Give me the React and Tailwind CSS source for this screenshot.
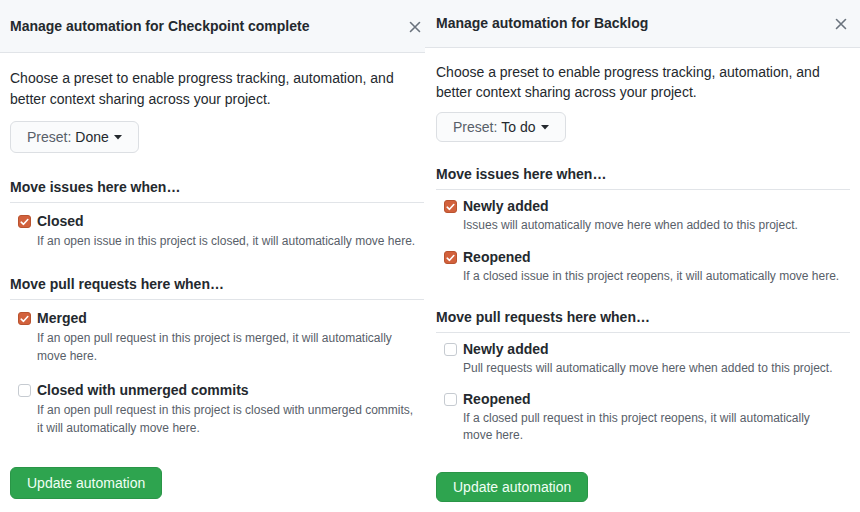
import React from 'react';

const font = { fontFamily: '"Liberation Sans", Arial, sans-serif' };

const CloseIcon = () => (
    <svg width="12" height="12" viewBox="0 0 12 12" className="text-[#6a737d]">
        <path d="M1.5 1.5 L10.5 10.5 M10.5 1.5 L1.5 10.5" stroke="currentColor" strokeWidth="1.6" strokeLinecap="round" />
    </svg>
);

const Checkbox = ({ checked }) =>
    checked ? (
        <span className="mt-[4px] flex h-[13px] w-[13px] shrink-0 items-center justify-center rounded-[3px] bg-[#d2613c] border border-[#b9532f]">
            <svg width="9" height="8" viewBox="0 0 9 8">
                <path d="M1.2 4.2 L3.5 6.3 L7.8 1.5" fill="none" stroke="#fff" strokeWidth="1.6" strokeLinecap="round" strokeLinejoin="round" />
            </svg>
        </span>
    ) : (
        <span className="mt-[4px] h-[13px] w-[13px] shrink-0 rounded-[3px] border border-[#c6cbd1] bg-white" />
    );

// descClass sets the line height per panel (the two dialogs differ a little)
const Option = ({ checked, title, desc, className, descClass }) => (
    <div className={`flex gap-[6px] pl-[8px] ${className || ''}`}>
        <Checkbox checked={checked} />
        <div>
            <div className="text-[14px] font-bold leading-[20px] text-[#24292e]">{title}</div>
            <div className={`mt-[1px] text-[12px] text-[#586069] ${descClass || 'leading-[18px]'}`}>{desc}</div>
        </div>
    </div>
);

const Caret = () => (
    <svg width="8" height="5" viewBox="0 0 8 5" className="ml-[5px]">
        <path d="M0 0 H8 L4 4.5 Z" fill="#24292e" />
    </svg>
);

const Heading = ({ children, className }) => (
    <div className={`border-b border-[#e1e4e8] pb-[5px] text-[14px] font-bold leading-[20px] text-[#24292e] ${className || ''}`}>
        {children}
    </div>
);

export default function App() {
    return (
        <div className="flex h-[512px] w-[860px] overflow-hidden bg-white" style={font}>
            {/* Checkpoint complete */}
            <div className="flex w-[425px] flex-col">
                <div className="flex h-[53px] shrink-0 items-center justify-between border-b border-[#e1e4e8] bg-[#f6f8fa] pl-[10px] pr-[4px] pt-[1px]">
                    <span className="text-[14px] font-bold text-[#24292e]">Manage automation for Checkpoint complete</span>
                    <CloseIcon />
                </div>
                <div className="pl-[10px] pr-[1px] pt-[15px]">
                    <p className="text-[14px] leading-[21px] text-[#24292e]">
                        Choose a preset to enable progress tracking, automation, and better context sharing across your project.
                    </p>
                    <button className="mt-[11px] flex h-[32px] items-center rounded-[6px] border border-[#dcdfe3] bg-[#fafbfc] px-[16px] text-[14px]">
                        <span className="text-[#586069]">Preset:</span>
                        <span className="ml-[4px] text-[#24292e]">Done</span>
                        <Caret />
                    </button>
                    <Heading className="mt-[24px]">Move issues here when…</Heading>
                    <Option
                        className="mt-[8px] pr-[7px]"
                        checked
                        title="Closed"
                        desc="If an open issue in this project is closed, it will automatically move here."
                    />
                    <Heading className="mt-[24px]">Move pull requests here when…</Heading>
                    <Option
                        className="mt-[8px] pr-[7px]"
                        checked
                        title="Merged"
                        desc="If an open pull request in this project is merged, it will automatically move here."
                    />
                    <Option
                        className="mt-[15px] pr-[7px]"
                        title="Closed with unmerged commits"
                        desc="If an open pull request in this project is closed with unmerged commits, it will automatically move here."
                    />
                    <button className="mt-[30px] flex h-[32px] items-center rounded-[6px] border border-[#2a9547] bg-[#2ea44f] px-[16px] text-[14px] text-[#f0fff4]">
                        Update automation
                    </button>
                </div>
            </div>

            {/* Backlog */}
            <div className="flex flex-1 flex-col">
                <div className="flex h-[48px] shrink-0 items-center justify-between border-b border-[#e1e4e8] bg-[#f6f8fa] pl-[11px] pr-[13px]">
                    <span className="text-[14px] font-bold text-[#24292e]">Manage automation for Backlog</span>
                    <CloseIcon />
                </div>
                <div className="pl-[11px] pr-[10px] pt-[14px]">
                    <p className="text-[14px] leading-[20px] text-[#24292e]">
                        Choose a preset to enable progress tracking, automation, and better context sharing across your project.
                    </p>
                    <button className="mt-[10px] flex h-[30px] items-center rounded-[6px] border border-[#dcdfe3] bg-[#fafbfc] px-[16px] text-[14px]">
                        <span className="text-[#586069]">Preset:</span>
                        <span className="ml-[4px] text-[#24292e]">To do</span>
                        <Caret />
                    </button>
                    <Heading className="mt-[22px]">Move issues here when…</Heading>
                    <Option
                        className="mt-[6px] pr-[9px]"
                        descClass="leading-[17px]"
                        checked
                        title="Newly added"
                        desc="Issues will automatically move here when added to this project."
                    />
                    <Option
                        className="mt-[13px] pr-[9px]"
                        descClass="leading-[17px]"
                        checked
                        title="Reopened"
                        desc="If a closed issue in this project reopens, it will automatically move here."
                    />
                    <Heading className="mt-[22px]">Move pull requests here when…</Heading>
                    <Option
                        className="mt-[6px] pr-[9px]"
                        descClass="leading-[17px]"
                        title="Newly added"
                        desc="Pull requests will automatically move here when added to this project."
                    />
                    <Option
                        className="mt-[12px] pr-[9px]"
                        descClass="leading-[17px]"
                        title="Reopened"
                        desc="If a closed pull request in this project reopens, it will automatically move here."
                    />
                    <button className="mt-[28px] flex h-[30px] items-center rounded-[6px] border border-[#2a9547] bg-[#2ea44f] px-[16px] text-[14px] text-[#f0fff4]">
                        Update automation
                    </button>
                </div>
            </div>
        </div>
    );
}
